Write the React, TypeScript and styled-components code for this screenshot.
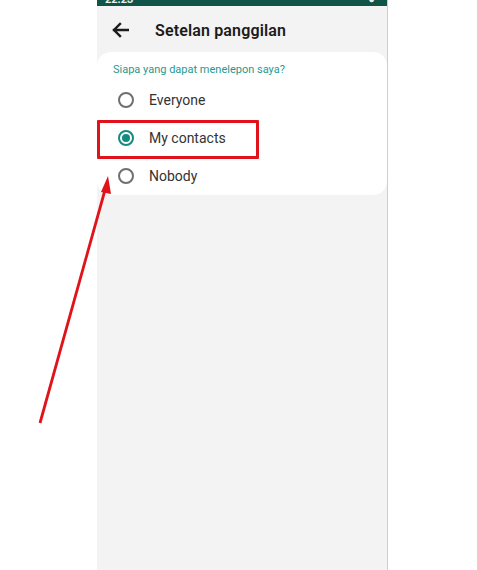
import React from "react";
import styled, { createGlobalStyle } from "styled-components";

const Global = createGlobalStyle`
  html, body { margin: 0; padding: 0; background: #ffffff; }
  body { font-family: Roboto, "Noto Sans", Arial, sans-serif; }
`;

const Page = styled.div`
  position: relative;
  width: 477px;
  height: 570px;
  overflow: hidden;
  display: flex;
  background: #ffffff;
`;

const Spacer = styled.div`
  width: 97px;
  flex: none;
`;

const Phone = styled.div`
  width: 290px;
  height: 570px;
  flex: none;
  background: #f3f3f3;
  border-right: 1px solid #cfcfcf;
  display: flex;
  flex-direction: column;
`;

const StatusBar = styled.div`
  height: 6px;
  background: #0f5446;
  overflow: hidden;
  display: flex;
  justify-content: space-between;
  padding: 0 12px 0 8px;
  color: #e8f0ee;
  font-size: 11px;
  font-weight: 700;
  line-height: 0;
`;

const Header = styled.div`
  height: 46px;
  display: flex;
  align-items: center;
  padding: 2px 0 0 14px;
  box-sizing: border-box;
  gap: 26px;
`;

const Title = styled.div`
  font-size: 16px;
  font-weight: 600;
  color: #1b1b1b;
  letter-spacing: 0.15px;
`;

const Card = styled.div`
  background: #ffffff;
  border-radius: 14px;
  padding: 11px 0 0 16px;
  display: flex;
  flex-direction: column;
`;

const Subtitle = styled.div`
  font-size: 11px;
  color: #1f9a90;
  margin-bottom: 5px;
`;

const Option = styled.div`
  height: 38px;
  display: flex;
  align-items: center;
  gap: 15px;
  padding-left: 5px;
`;

const Radio = styled.div<{ $on?: boolean }>`
  width: 12px;
  height: 12px;
  border-radius: 50%;
  border: 2px solid ${(p) => (p.$on ? "#128c7e" : "#6f6f6f")};
  display: flex;
  align-items: center;
  justify-content: center;
  &::after {
    content: "";
    width: 8px;
    height: 8px;
    border-radius: 50%;
    background: ${(p) => (p.$on ? "#128c7e" : "transparent")};
  }
`;

const Label = styled.div`
  font-size: 14px;
  color: #333333;
`;

const Highlight = styled.div`
  position: absolute;
  left: 97px;
  top: 120px;
  width: 156px;
  height: 33px;
  border: 3px solid #e0121a;
  border-radius: 1px;
`;

const ArrowSvg = styled.svg`
  position: absolute;
  left: 0;
  top: 0;
  pointer-events: none;
`;

const BackArrow = () => (
  <svg width="18" height="16" viewBox="0 0 18 16">
    <path d="M17 8H3M9 2L3 8l6 6" fill="none" stroke="#1b1b1b" strokeWidth="2.4" strokeLinecap="square" />
  </svg>
);

export default function App() {
  const options = [
    { label: "Everyone", on: false },
    { label: "My contacts", on: true },
    { label: "Nobody", on: false },
  ];
  return (
    <>
      <Global />
      <Page>
        <Spacer />
        <Phone>
          <StatusBar>
            <span>22:23</span>
            <span>●</span>
          </StatusBar>
          <Header>
            <BackArrow />
            <Title>Setelan panggilan</Title>
          </Header>
          <Card>
            <Subtitle>Siapa yang dapat menelepon saya?</Subtitle>
            {options.map((o) => (
              <Option key={o.label}>
                <Radio $on={o.on} />
                <Label>{o.label}</Label>
              </Option>
            ))}
          </Card>
        </Phone>
        <Highlight />
        <ArrowSvg width="477" height="570">
          <line x1="40" y1="423" x2="105" y2="190" stroke="#e0121a" strokeWidth="2.8" />
          <polygon points="108,176 101,192 111,194" fill="#e0121a" />
        </ArrowSvg>
      </Page>
    </>
  );
}
